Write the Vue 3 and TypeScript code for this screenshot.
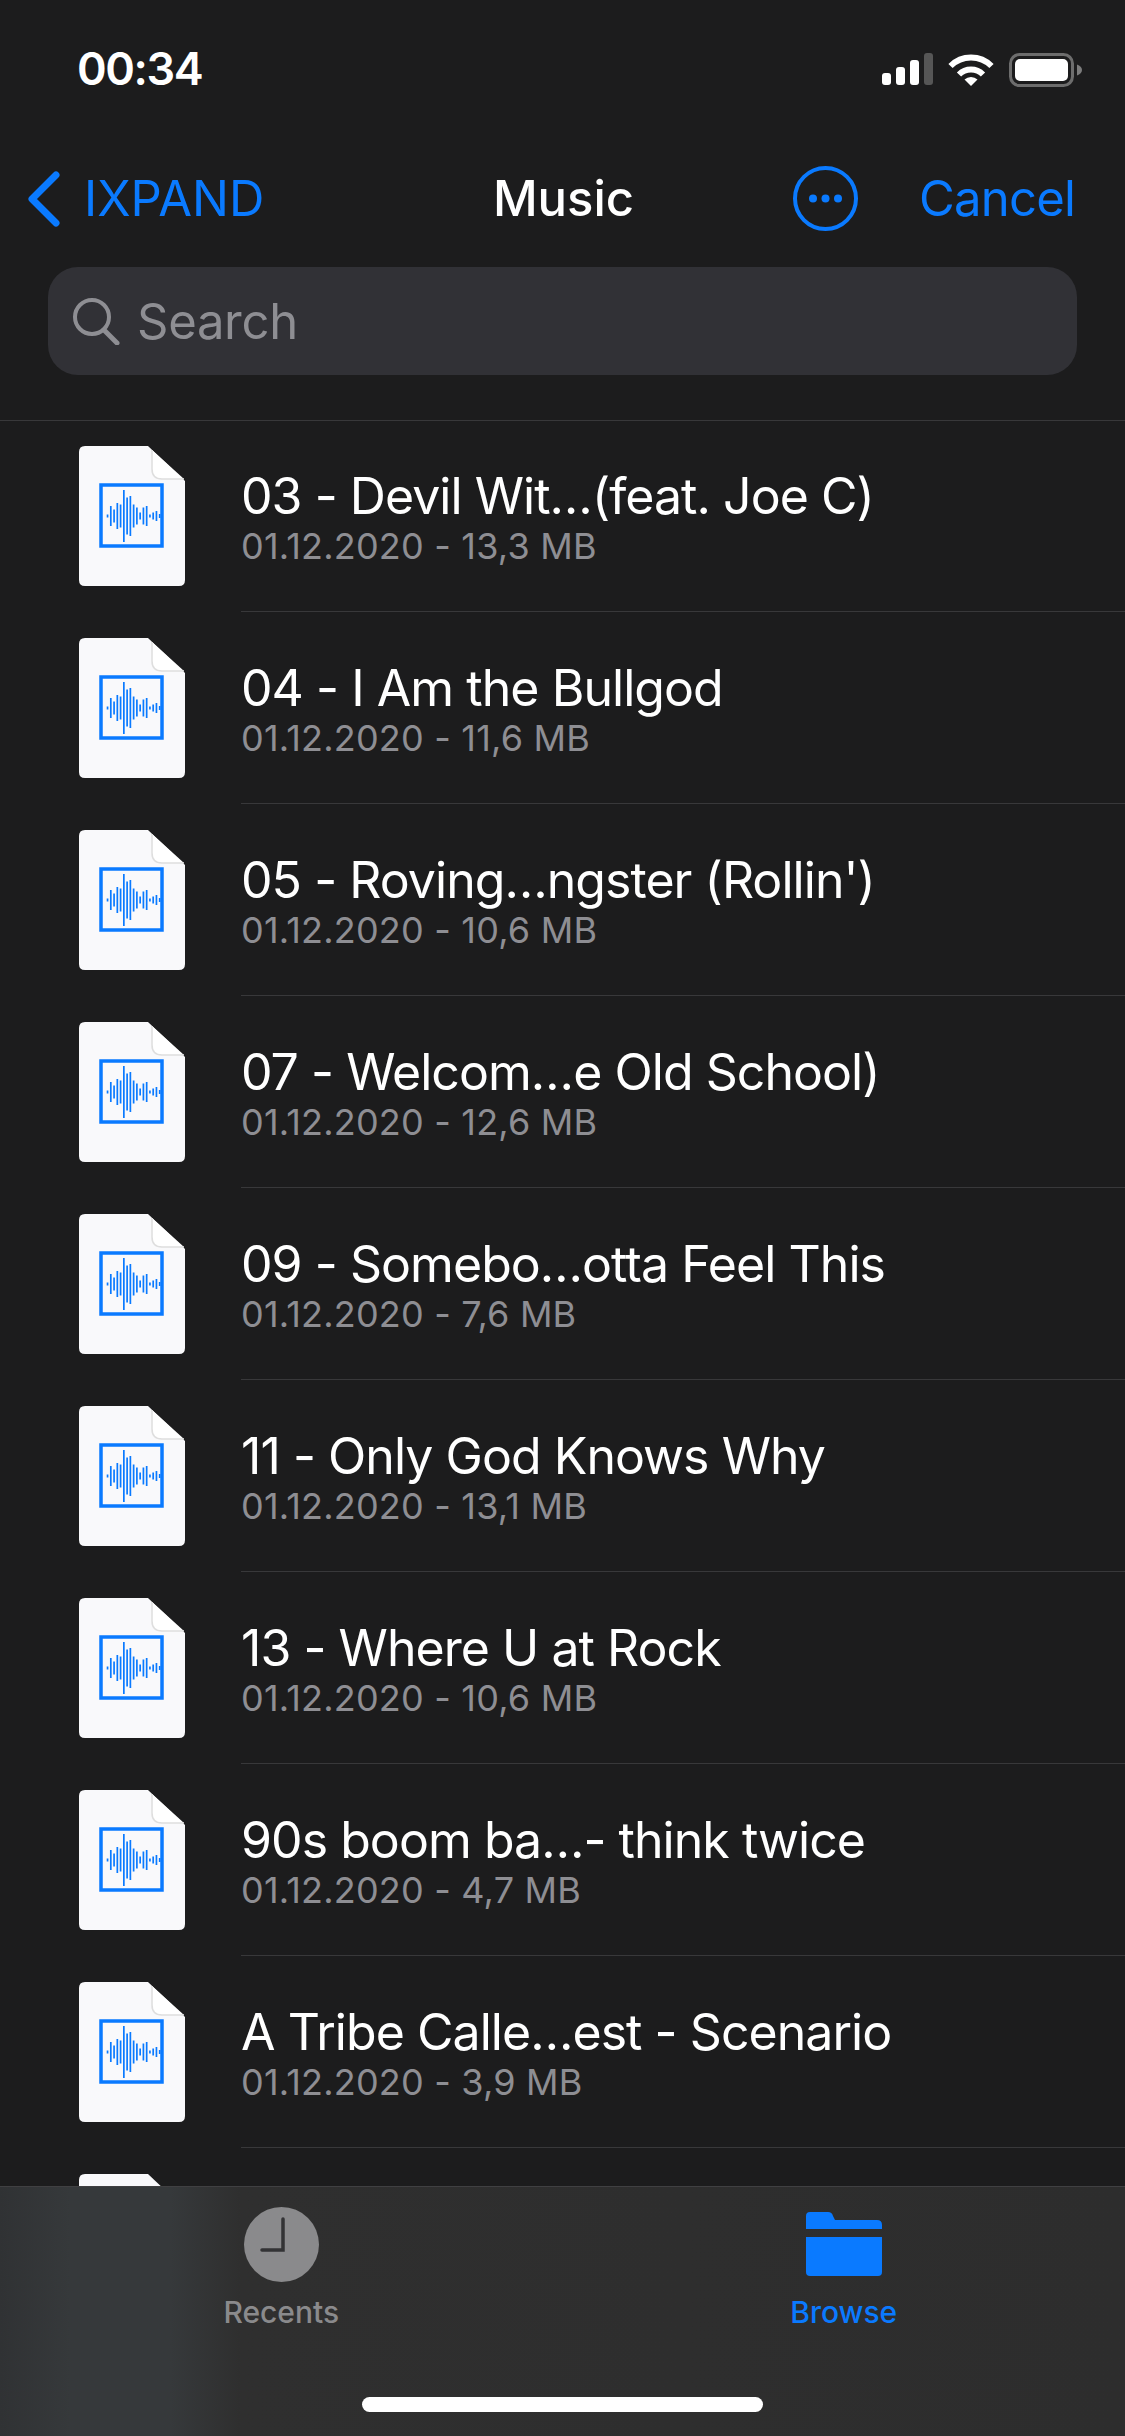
<template>
  <div class="phone">
    <div class="status">
      <span class="time">00:34</span>
      <div class="status-icons">
        <svg class="signal" width="51" height="32" viewBox="0 0 51 32">
          <rect x="0" y="20" width="9" height="12" rx="3" fill="#fff" />
          <rect x="14" y="14" width="9" height="18" rx="3" fill="#fff" />
          <rect x="28" y="7" width="9" height="25" rx="3" fill="#fff" />
          <rect x="42" y="0" width="9" height="32" rx="3" fill="#565656" />
        </svg>
        <svg class="wifi" width="46" height="33" viewBox="0 0 46 33">
          <path d="M2.5 13A29 29 0 0 1 43.500 13" fill="none" stroke="#fff" stroke-width="6" />
          <path d="M11 21.500A17 17 0 0 1 35 21.500" fill="none" stroke="#fff" stroke-width="6" />
          <path d="M23 33L16.500 26.500A9.500 9.500 0 0 1 29.500 26.500Z" fill="#fff" />
        </svg>
        <svg class="battery" width="73" height="34" viewBox="0 0 73 34">
          <rect x="1.500" y="1.500" width="62" height="31" rx="9" fill="none" stroke="#6d6d6d" stroke-width="3" />
          <rect x="6" y="6" width="53" height="22" rx="5" fill="#fff" />
          <path d="M68 11.500C71 12.500 73 14.500 73 17C73 19.500 71 21.500 68 22.500Z" fill="#7c7c7c" />
        </svg>
      </div>
    </div>

    <div class="nav">
      <div class="nav-left">
        <svg width="33" height="56" viewBox="0 0 33 56">
          <path d="M29 4L5 28L29 52" fill="none" stroke="#0a7aff" stroke-width="7" stroke-linecap="round" stroke-linejoin="round" />
        </svg>
        <span class="back-label">IXPAND</span>
      </div>
      <span class="nav-title">Music</span>
      <div class="nav-right">
        <svg width="65" height="65" viewBox="0 0 65 65">
          <circle cx="32.500" cy="32.500" r="30.500" fill="none" stroke="#0a7aff" stroke-width="4" />
          <circle cx="20" cy="32.500" r="4" fill="#0a7aff" />
          <circle cx="32.500" cy="32.500" r="4" fill="#0a7aff" />
          <circle cx="45" cy="32.500" r="4" fill="#0a7aff" />
        </svg>
        <span class="cancel">Cancel</span>
      </div>
    </div>

    <div class="search">
      <svg width="48" height="48" viewBox="0 0 48 48">
        <circle cx="20" cy="20" r="17" fill="none" stroke="#8e8e93" stroke-width="4" />
        <path d="M32 33L45 46" stroke="#8e8e93" stroke-width="5" stroke-linecap="round" />
      </svg>
      <span class="search-text">Search</span>
    </div>

    <div class="list">
      <div v-for="file in files" :key="file.name" class="row">
        <svg class="doc" width="106" height="140" viewBox="0 0 106 140">
          <path d="M6 0H69L106 35V134Q106 140 100 140H6Q0 140 0 134V6Q0 0 6 0Z" fill="#f9f9fb" />
          <path d="M73 4V23Q73 33 83 33H105Z" fill="#fff" />
          <path d="M73 4V23Q73 33 83 33H105" fill="none" stroke="#dedede" stroke-width="1.500" />
          <rect x="22" y="39" width="61" height="61" fill="none" stroke="#0a7aff" stroke-width="3.500" />
          <rect
            v-for="(bar, i) in bars"
            :key="i"
            :x="27.700 + i * 3.260"
            :y="70 - bar / 2"
            width="1.700"
            :height="bar"
            fill="#0a7aff"
          />
        </svg>
        <div class="row-body">
          <div class="name">{{ file.name }}</div>
          <div class="meta">01.12.2020 - {{ file.size }}</div>
        </div>
      </div>
      <div class="row">
        <svg class="doc" width="106" height="140" viewBox="0 0 106 140">
          <path d="M6 0H69L106 35V134Q106 140 100 140H6Q0 140 0 134V6Q0 0 6 0Z" fill="#f9f9fb" />
        </svg>
      </div>
    </div>

    <div class="tabbar">
      <div class="tabs">
        <div class="tab">
          <svg width="75" height="75" viewBox="0 0 75 75">
            <circle cx="37.500" cy="37.500" r="37.500" fill="#8a8a8c" />
            <path d="M39 12V43H18" fill="none" stroke="#333335" stroke-width="3.500" stroke-linecap="round" />
          </svg>
          <span class="tab-label">Recents</span>
        </div>
        <div class="tab active">
          <svg width="76" height="75" viewBox="0 0 76 75">
            <path d="M0 22V9Q0 5 4 5H22Q26 5 27 9L29 13H71Q76 13 76 18V22Z" fill="#0a7aff" />
            <path d="M0 30H76V65Q76 69 72 69H4Q0 69 0 65Z" fill="#0a7aff" />
          </svg>
          <span class="tab-label">Browse</span>
        </div>
      </div>
      <div class="home-bar"></div>
    </div>
  </div>
</template>

<script setup lang="ts">
interface AudioFile {
  name: string
  size: string
}

const files: AudioFile[] = [
  { name: '03 - Devil Wit…(feat. Joe C)', size: '13,3 MB' },
  { name: '04 - I Am the Bullgod', size: '11,6 MB' },
  { name: "05 - Roving…ngster (Rollin')", size: '10,6 MB' },
  { name: '07 - Welcom…e Old School)', size: '12,6 MB' },
  { name: '09 - Somebo…otta Feel This', size: '7,6 MB' },
  { name: '11 - Only God Knows Why', size: '13,1 MB' },
  { name: '13 - Where U at Rock', size: '10,6 MB' },
  { name: '90s boom ba…- think twice', size: '4,7 MB' },
  { name: 'A Tribe Calle…est - Scenario', size: '3,9 MB' }
]

// bar heights of the waveform glyph, left to right
const bars = [3, 20, 13, 26, 23, 52, 37, 40, 23, 17, 7, 17, 20, 3, 7, 10, 4]
</script>

<style>
html, body {
  background: #1c1c1d;
}
</style>

<style scoped>
.phone {
  width: 1125px;
  height: 2436px;
  display: flex;
  flex-direction: column;
  overflow: hidden;
  background: #1c1c1d;
  color: #fff;
  font-family: Inter, "Liberation Sans", sans-serif;
}
.status {
  height: 137px;
  flex: none;
  display: flex;
  justify-content: space-between;
  padding: 42px 43px 0 77px;
  box-sizing: border-box;
}
.time {
  font-size: 45px;
  font-weight: 600;
  line-height: 54px;
  letter-spacing: -1.4px;
}
.status-icons {
  display: flex;
  gap: 15px;
  align-items: flex-start;
  padding-top: 11px;
}
.nav {
  flex: none;
  height: 130px;
  display: grid;
  grid-template-columns: 1fr auto 1fr;
  align-items: flex-start;
  padding: 29px 50px 0;
  box-sizing: border-box;
}
.nav-left, .nav-right {
  display: flex;
  align-items: center;
  height: 65px;
}
.nav-left {
  gap: 24px;
  margin-left: -23px;
}
.nav-right {
  justify-content: flex-end;
  gap: 61px;
}
.back-label, .cancel {
  font-size: 49px;
  color: #0a7aff;
}
.cancel {
  letter-spacing: -0.8px;
}
.nav-title {
  font-size: 49px;
  font-weight: 500;
  line-height: 65px;
  margin-left: 2px;
}
.search {
  flex: none;
  width: 1029px;
  height: 108px;
  margin-left: 48px;
  border-radius: 30px;
  background: #313136;
  display: flex;
  align-items: center;
  gap: 17px;
  padding-left: 24px;
  box-sizing: border-box;
}
.search-text {
  font-size: 49px;
  letter-spacing: -0.3px;
  color: #8e8e93;
}
.list {
  flex: 1;
  min-height: 0;
  overflow: hidden;
  margin-top: 45px;
  border-top: 1px solid #38383a;
}
.row {
  height: 192px;
  display: flex;
  padding-left: 79px;
  box-sizing: border-box;
}
.doc {
  flex: none;
  margin-top: 25px;
}
.row-body {
  flex: 1;
  margin-left: 56px;
  border-bottom: 1px solid #38383a;
  padding-top: 45px;
  margin-bottom: 1px;
}
.name {
  font-size: 50px;
  line-height: 60px;
  letter-spacing: -0.95px;
}
.meta {
  font-size: 36px;
  line-height: 40px;
  letter-spacing: 0.2px;
  color: #8e8e93;
}
.tabbar {
  flex: none;
  height: 250px;
  position: relative;
  border-top: 1px solid #404042;
  background: linear-gradient(90deg, #303234 0, #36393b 70px, #36393b 170px, #2f2f2f 240px, #2d2d2d 100%);
  box-sizing: border-box;
}
.tabs {
  display: flex;
  padding-top: 20px;
}
.tab {
  flex: 1;
  display: flex;
  flex-direction: column;
  align-items: center;
  gap: 12px;
}
.tab-label {
  font-size: 30px;
  line-height: 36px;
  font-weight: 500;
  color: #8a8a8c;
}
.tab.active .tab-label {
  color: #0a7aff;
}
.home-bar {
  position: absolute;
  left: 362px;
  bottom: 24px;
  width: 401px;
  height: 15px;
  border-radius: 8px;
  background: #fff;
}
</style>
